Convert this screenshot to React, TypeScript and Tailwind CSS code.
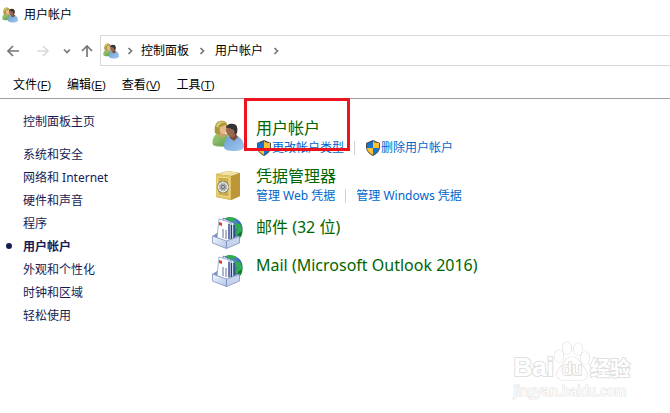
import type { ReactNode } from "react";
import clsx from "clsx";

interface IconProps {
  className?: string;
}

const UsersIcon = ({ className }: IconProps) => (
  <svg viewBox="0 0 32 32" className={className} aria-hidden="true">
    <defs>
      <linearGradient id="green" x1="0" y1="0" x2="1" y2="1">
        <stop offset="0" stopColor="#a5cf7c" />
        <stop offset="1" stopColor="#5c9a48" />
      </linearGradient>
      <linearGradient id="blue" x1="0" y1="0" x2="1" y2="1">
        <stop offset="0" stopColor="#6b9fd8" />
        <stop offset="1" stopColor="#a4c8ee" />
      </linearGradient>
    </defs>
    <path d="M0.500 23c0-6 2.500-9 6.500-10l7 1c3 2 4 5 4 10-2 2-6 3-10 2.500-5 0-7.500-1-7.500-3.500z" fill="url(#green)" />
    <path d="M8 12h5v4l-2 2-4-3z" fill="#d69d6c" />
    <path d="M3 13C2 8 3 2 8 1c5-1 8 2 7 6l-6 1-1 6c-2 1-4 0-5-1z" fill="#a99a3c" />
    <path d="M4 6c1-4 5-6 10-3-4-1-7 1-8 5z" fill="#d6c96e" />
    <path d="M8 7c2 0 4-2 6-2 2 4 0 9-3 9-2 0-4-3-3-7z" fill="#e8b98c" />
    <path d="M12 27c0-6 2-10 6-11h7c4 2 7 5 7 11-1 3-5 4-10 4s-10-1-10-4z" fill="url(#blue)" />
    <path d="M17 15l7-1 2 3-4 4-4-3z" fill="#7b4d38" />
    <path d="M14 10c0-4 3-6 6-6 4 0 6 3 5 8-1 3-3 5-5 5-4 0-6-3-6-7z" fill="#99664e" />
    <path d="M14 8c0-3 4-5 7-4 4 0 5 4 4 9l-2 2-1-5c-3-1-5-3-8-2z" fill="#343137" />
  </svg>
);

const SafeIcon = ({ className }: IconProps) => (
  <svg viewBox="0 0 32 32" className={className} aria-hidden="true">
    <path d="M4 4l12-3 12 2v23l-9 4L4 27z" fill="#b48b2b" />
    <path d="M4 4l12-3 12 2-8 3z" fill="#f0e2a2" />
    <path d="M19 6l9-3v23l-9 4z" fill="#bd9637" />
    <path d="M4 4l15 2v24L4 27z" fill="#e0c566" />
    <path d="M6 7l11 1v19L6 25z" fill="#cdaa48" stroke="#eddc92" strokeWidth="1" />
    <circle cx="11" cy="17" r="6" fill="#73746b" />
    <circle cx="11" cy="17" r="4.500" fill="#8c8e88" stroke="#e6e7e1" strokeWidth="1.500" />
    <path d="M11 11v12M5 17h12M7 13l8 8M15 13l-8 8" stroke="#deded9" strokeWidth="0.800" />
    <circle cx="11" cy="17" r="2" fill="#666" />
    <circle cx="11" cy="17" r="1" fill="#ddd" />
  </svg>
);

const MailIcon = ({ className }: IconProps) => (
  <svg viewBox="0 0 32 32" className={className} aria-hidden="true">
    <defs>
      <radialGradient id="globe" cx="0.4" cy="0.3" r="0.7">
        <stop offset="0" stopColor="#78adf3" />
        <stop offset="1" stopColor="#1b459e" />
      </radialGradient>
      <linearGradient id="tray" x1="0" y1="0" x2="1" y2="1">
        <stop offset="0" stopColor="#f3f7ff" />
        <stop offset="1" stopColor="#b4c5e5" />
      </linearGradient>
    </defs>
    <circle cx="19" cy="12" r="11.500" fill="url(#globe)" />
    <path d="M12 2c4-3 9-2 12 0l-3 3-8-1zM23 6l5 1c4 5 3 12-1 15l-4-5 2-5-4-3z" fill="#2fac4c" />
    <path d="M26 17l4-3c0 4-2 7-5 9z" fill="#17713a" />
    <path d="M0.500 19l6-4 17 4 4 0-13 8z" fill="#7f95c5" />
    <path d="M14 2l8 4v18l-7 2z" fill="#e8effc" stroke="#4966a5" strokeWidth="0.700" />
    <path d="M11 1l8 4v20l-6 1z" fill="#f5f8ff" stroke="#4966a5" strokeWidth="0.700" />
    <path d="M7 2l10 3v21L5 21z" fill="#fff" stroke="#7c92c3" strokeWidth="0.700" />
    <path d="M17 7v15M19.500 8v14M22 8v13" stroke="#233c7d" strokeWidth="1.200" />
    <path d="M11 12v9M14 13v9" stroke="#5b719f" strokeWidth="1" />
    <path d="M7 5l3 1v3L7 8z" fill="#ee3a18" />
    <path d="M0.500 19l14 5v7.500L0.500 26z" fill="url(#tray)" stroke="#6f84b2" strokeWidth="0.700" />
    <path d="M14.500 24l13-5v7l-13 5.500z" fill="#c6d4ee" stroke="#6f84b2" strokeWidth="0.700" />
  </svg>
);

const ShieldIcon = ({ className }: IconProps) => (
  <svg viewBox="0 0 16 16" className={className} aria-hidden="true">
    <path d="M8 0l7 3v4c0 4-3 7-7 9-4-2-7-5-7-9V3z" fill="#4d4f50" />
    <path d="M8 1v7H2V3c2 0 4 0 6-2z" fill="#1673cf" />
    <path d="M8 1c2 2 4 2 6 2v5H8z" fill="#fcc12e" />
    <path d="M2 8h6v7c-3-2-6-4-6-7z" fill="#fcc12e" />
    <path d="M8 8h6c0 3-3 5-6 7z" fill="#1673cf" />
  </svg>
);

const ArrowIcon = ({ className }: IconProps) => (
  <svg viewBox="0 0 14 12" className={className} fill="none" stroke="currentColor" strokeWidth="1.700" aria-hidden="true">
    <path d="M13 6H2M7 1L2 6l5 5" />
  </svg>
);

const ChevronIcon = ({ className }: IconProps) => (
  <svg viewBox="0 0 6 8" className={className} fill="none" stroke="currentColor" strokeWidth="1.700" aria-hidden="true">
    <path d="M1.500 1l3 3-3 3" />
  </svg>
);

const menus = [
  { label: "文件", letter: "F" },
  { label: "编辑", letter: "E" },
  { label: "查看", letter: "V" },
  { label: "工具", letter: "T" },
];

const sections = [
  "系统和安全",
  "网络和 Internet",
  "硬件和声音",
  "程序",
  "用户帐户",
  "外观和个性化",
  "时钟和区域",
  "轻松使用",
];

interface CategoryProps {
  title: string;
  icon: ReactNode;
  tasks?: string[];
  shield?: boolean;
  highlighted?: boolean;
}

const Category = ({ title, icon, tasks, shield, highlighted }: CategoryProps) => (
  <section className="relative flex gap-3">
    {icon}
    <div>
      <h2 className="text-base leading-5 text-[#006600]">
        <a href="#" className="hover:underline">{title}</a>
      </h2>
      {tasks && (
        <ul className="flex text-xs leading-5 text-[#0066cc]">
          {tasks.map((task, i) => (
            <li key={task} className="flex items-center">
              {i > 0 && <span className="mx-2.5 h-3.5 w-px bg-[#d0d0d0]" />}
              <a href="#" className="flex items-center whitespace-nowrap hover:underline">
                {shield && <ShieldIcon className="size-4" />}
                {task}
              </a>
            </li>
          ))}
        </ul>
      )}
    </div>
    {highlighted && (
      <div className="pointer-events-none absolute -top-5 left-8 h-[53px] w-[106px] border-3 border-[#ed1420]" />
    )}
  </section>
);

const Watermark = () => (
  <div
    aria-hidden="true"
    className="pointer-events-none absolute right-10 bottom-3 font-['Liberation_Sans','Noto_Sans_CJK_SC',sans-serif] text-white select-none [paint-order:stroke_fill] [-webkit-text-stroke:2px_#e0e0e0]"
  >
    <div className="flex h-11 items-end">
      <span className="text-[26px] leading-7 font-bold">Bai</span>
      <div className="relative flex h-10 w-9 items-end justify-center">
        <svg viewBox="0 0 36 40" className="absolute inset-0" fill="#fff" stroke="#dedede" strokeWidth="1.200">
          <ellipse cx="5" cy="15" rx="4.500" ry="6" />
          <ellipse cx="13" cy="7" rx="4.500" ry="6" />
          <ellipse cx="24" cy="8" rx="4.500" ry="6" />
          <ellipse cx="31" cy="17" rx="4.500" ry="6" />
          <path d="M18 16c-7 0-8 7-13 12-4 5-2 11 4 11h18c7 0 8-6 4-11-5-5-6-12-13-12z" />
        </svg>
        <span className="relative text-lg leading-6 text-white">du</span>
      </div>
      <span className="text-xl leading-6 font-bold">经验</span>
    </div>
    <div className="text-sm leading-5 [-webkit-text-stroke:1px_#dedede]">jingyan.baidu.com</div>
  </div>
);

export default function App() {
  return (
    <div className="relative min-h-screen overflow-hidden bg-white font-['Noto_Sans','Noto_Sans_CJK_SC',sans-serif] text-xs text-black">
      <header>
        <div className="flex h-7 items-center gap-1.5 px-0.5 pt-0.5">
          <UsersIcon className="size-4" />
          <h1>用户帐户</h1>
        </div>

        <div className="flex items-center pt-[7px] text-[#777]">
          <div className="flex w-25 shrink-0 items-center pl-1.5">
            <button aria-label="后退">
              <ArrowIcon className="h-3 w-3.5" />
            </button>
            <button aria-label="前进" className="ml-4 text-[#dadada]">
              <ArrowIcon className="h-3 w-3.5 rotate-180" />
            </button>
            <button aria-label="最近浏览的位置" className="ml-3.5">
              <ChevronIcon className="h-2 w-1.5 rotate-90" />
            </button>
            <button aria-label="上移" className="ml-2.5">
              <ArrowIcon className="h-3 w-3.5 rotate-90" />
            </button>
          </div>
          <nav className="flex h-[31px] flex-1 items-center border border-r-0 border-[#d9d9d9] pl-0.5">
            <UsersIcon className="size-4" />
            <ChevronIcon className="mx-2 h-2 w-1.5" />
            <a href="#" className="text-black">控制面板</a>
            <ChevronIcon className="mx-2.5 h-2 w-1.5" />
            <a href="#" className="text-black">用户帐户</a>
            <ChevronIcon className="ml-2.5 h-2 w-1.5" />
          </nav>
        </div>

        <div className="flex h-[33px] items-center gap-4 border-b border-[#a0a0a0] px-[13px] pt-1.5">
          {menus.map(({ label, letter }) => (
            <button key={letter} className="flex items-center">
              {label}
              <span className="font-['Liberation_Sans',sans-serif] text-[11px]">
                (<u>{letter}</u>)
              </span>
            </button>
          ))}
        </div>
      </header>

      <div className="flex">
        <aside className="w-[212px] shrink-0 pt-[11px] pl-[23px] leading-[23px] text-[#151c55]">
          <a href="#" className="hover:underline">控制面板主页</a>
          <ul className="mt-2.5">
            {sections.map((name) => {
              const current = name === "用户帐户";
              return (
                <li key={name} className={clsx("relative", current && "font-bold")}>
                  {current && <span className="absolute top-2 -left-[17px] size-1.5 rounded-full bg-[#151c55]" />}
                  <a href="#" className="hover:underline">{name}</a>
                </li>
              );
            })}
          </ul>
        </aside>

        <main className="flex-1 pt-[19px]">
          <div className="flex flex-col gap-2">
            <Category
              title="用户帐户"
              icon={<UsersIcon className="mt-0.5 size-8" />}
              tasks={["更改帐户类型", "删除用户帐户"]}
              shield
              highlighted
            />
            <Category
              title="凭据管理器"
              icon={<SafeIcon className="mt-1 size-8" />}
              tasks={["管理 Web 凭据", "管理 Windows 凭据"]}
            />
          </div>
          <div className="mt-[11px] flex flex-col gap-1.5">
            <Category title="邮件 (32 位)" icon={<MailIcon className="size-8" />} />
            <Category title="Mail (Microsoft Outlook 2016)" icon={<MailIcon className="size-8" />} />
          </div>
        </main>
      </div>

      <Watermark />
    </div>
  );
}
